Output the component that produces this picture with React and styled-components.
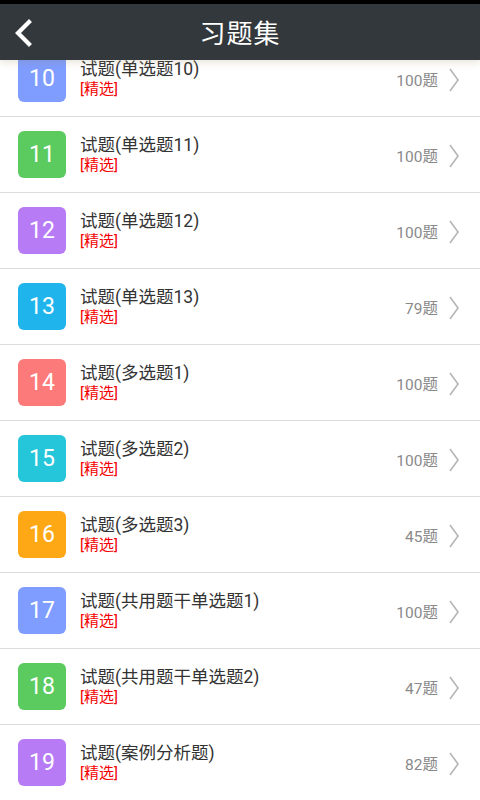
import styled, { createGlobalStyle } from "styled-components";

const GlobalStyle = createGlobalStyle`
  body {
    margin: 0;
    background: #000;
    font-family: Roboto, "Noto Sans CJK SC", sans-serif;
  }
`;

const sets = [
  { no: 10, name: "试题(单选题10)", count: 100, color: "#7f9dff" },
  { no: 11, name: "试题(单选题11)", count: 100, color: "#5ccb5f" },
  { no: 12, name: "试题(单选题12)", count: 100, color: "#b77cf5" },
  { no: 13, name: "试题(单选题13)", count: 79, color: "#1fb4ec" },
  { no: 14, name: "试题(多选题1)", count: 100, color: "#fc7a7a" },
  { no: 15, name: "试题(多选题2)", count: 100, color: "#26c6da" },
  { no: 16, name: "试题(多选题3)", count: 45, color: "#ffa816" },
  { no: 17, name: "试题(共用题干单选题1)", count: 100, color: "#7f9dff" },
  { no: 18, name: "试题(共用题干单选题2)", count: 47, color: "#5ccb5f" },
  { no: 19, name: "试题(案例分析题)", count: 82, color: "#b77cf5" },
];

export default function App() {
  return (
    <>
      <GlobalStyle />
      <Page>
        <Header>
          <BackButton>
            <svg width="20" height="28" viewBox="0 0 20 28">
              <path d="M16 3 L5 14 L16 25" fill="none" stroke="#fff" strokeWidth="4.2" strokeLinecap="square" />
            </svg>
          </BackButton>
          <Title>习题集</Title>
        </Header>
        <List>
          {sets.map((s) => (
            <Row key={s.no}>
              <Badge color={s.color}>{s.no}</Badge>
              <Info>
                <Name>{s.name}</Name>
                <Tag>[精选]</Tag>
              </Info>
              <Count>{s.count}题</Count>
              <svg width="14" height="26" viewBox="0 0 14 26">
                <path d="M3 2 L11 13 L3 24" fill="none" stroke="#b5b5b5" strokeWidth="1.6" />
              </svg>
            </Row>
          ))}
        </List>
      </Page>
    </>
  );
}

const Page = styled.div`
  width: 480px;
  height: 800px;
  overflow: hidden;
  background: #fff;
  border-top: 4px solid #000;
  box-sizing: border-box;
  position: relative;
`;

const Header = styled.div`
  position: relative;
  z-index: 2;
  height: 56px;
  background: #33383c;
  display: flex;
  align-items: center;
  justify-content: center;
  box-shadow: 0 3px 7px rgba(150, 130, 90, 0.2);
`;

const BackButton = styled.div`
  position: absolute;
  left: 13px;
  top: 15px;
  display: flex;
`;

const Title = styled.h1`
  margin: -2px 0 0;
  color: #fff;
  font-size: 26px;
  font-weight: normal;
  letter-spacing: 1px;
`;

const List = styled.ul`
  list-style: none;
  margin: -19px 0 0;
  padding: 0;
`;

const Row = styled.li`
  height: 76px;
  box-sizing: border-box;
  border-bottom: 1px solid #dcdcdc;
  display: flex;
  align-items: center;
  padding: 0 19px 0 18px;
  svg {
    margin-left: 9px;
    margin-top: 2px;
  }
`;

const Badge = styled.div`
  width: 48px;
  height: 47px;
  border-radius: 6px;
  background: ${(p) => p.color};
  color: #fff;
  font-size: 23px;
  display: flex;
  align-items: center;
  justify-content: center;
  flex-shrink: 0;
`;

const Info = styled.div`
  flex: 1;
  display: flex;
  flex-direction: column;
  margin-left: 14px;
`;

const Name = styled.div`
  font-size: 17.5px;
  color: #333;
  line-height: 21px;
`;

const Tag = styled.div`
  font-size: 15px;
  color: #f40000;
  line-height: 18px;
`;

const Count = styled.div`
  font-size: 15.5px;
  color: #8a8a8a;
`;
